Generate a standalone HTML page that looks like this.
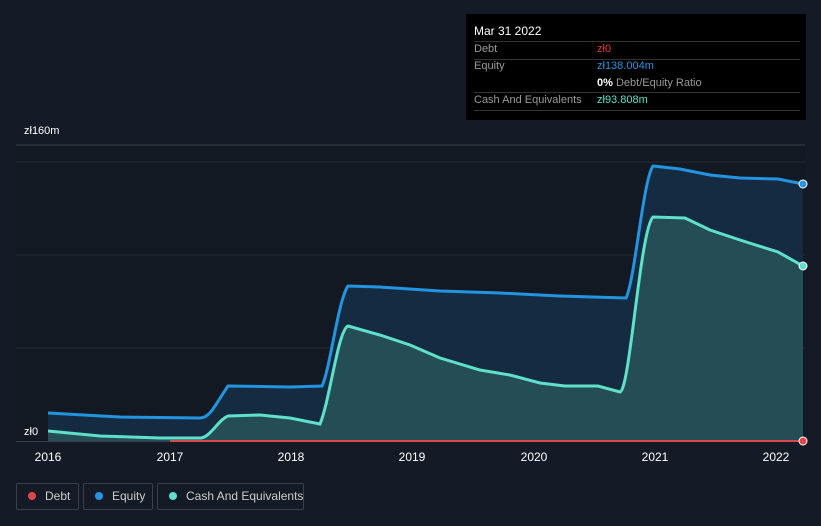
<!DOCTYPE html>
<html><head><meta charset="utf-8"><style>
body{margin:0;width:821px;height:526px;background:#151b26;font-family:"Liberation Sans",sans-serif;overflow:hidden;position:relative}
.tt{position:absolute;left:466px;top:14px;width:340px;height:106px;background:#000;color:#fff;font-size:11px}
.row{position:absolute;left:8px;width:326px;border-top:1px solid #333}
.lab{position:absolute;left:8px;color:#999}
.val{position:absolute;left:131px}
.leg{position:absolute;top:483px;height:27px;border:1px solid #3a404b;border-radius:2px;color:#ccc;font-size:12px;line-height:25px;box-sizing:border-box;white-space:nowrap}
.leg i{position:absolute;left:11px;top:8px;width:8px;height:8px;border-radius:50%}
.yr{position:absolute;top:450px;color:#fff;font-size:12px;transform:translateX(-50%)}
</style></head><body>
<svg width="821" height="526" style="position:absolute;left:0;top:0">
<rect x="16" y="145" width="789" height="296" fill="#131922"/>
<line x1="16" y1="145" x2="805" y2="145" stroke="#3a404b"/>
<line x1="16" y1="162" x2="805" y2="162" stroke="#262c36"/>
<line x1="16" y1="255" x2="805" y2="255" stroke="#262c36"/>
<line x1="16" y1="348" x2="805" y2="348" stroke="#262c36"/>
<path d="M48,413 L120,417 L200,418 C210,418 215,405 228,386 L290,387 L322,386 C330,370 338,300 348,286 L380,287 L440,291 L500,293 L560,296 L626,298 C635,280 643,180 653,166 L680,169 L710,175 L740,178 L778,179 L803,184 L803,441 L48,441Z" fill="#16304a" opacity="0.8"/>
<path d="M48,431 L100,436 L160,438 L200,438 C210,438 218,420 228,416 L260,415 L290,418 L320,424 C330,400 338,330 348,326 L380,335 L410,345 L440,358 L480,370 L510,375 L540,383 L565,386 L598,386 L620,392 C630,390 640,230 653,217 L685,218 L710,230 L740,240 L778,252 L803,266 L803,441 L48,441Z" fill="#2a5a5c" opacity="0.75"/>
<path d="M48,413 L120,417 L200,418 C210,418 215,405 228,386 L290,387 L322,386 C330,370 338,300 348,286 L380,287 L440,291 L500,293 L560,296 L626,298 C635,280 643,180 653,166 L680,169 L710,175 L740,178 L778,179 L803,184" fill="none" stroke="#2394e0" stroke-width="3"/>
<path d="M48,431 L100,436 L160,438 L200,438 C210,438 218,420 228,416 L260,415 L290,418 L320,424 C330,400 338,330 348,326 L380,335 L410,345 L440,358 L480,370 L510,375 L540,383 L565,386 L598,386 L620,392 C630,390 640,230 653,217 L685,218 L710,230 L740,240 L778,252 L803,266" fill="none" stroke="#5fe0cb" stroke-width="3"/>
<line x1="16" y1="441.5" x2="805" y2="441.5" stroke="#3a404b"/>
<line x1="170" y1="441" x2="803" y2="441" stroke="#e0474c" stroke-width="2"/>
<circle cx="803" cy="184" r="4" fill="#2394e0" stroke="#fff" stroke-width="1"/>
<circle cx="803" cy="266" r="4" fill="#5fe0cb" stroke="#fff" stroke-width="1"/>
<circle cx="803" cy="441" r="4" fill="#e0474c" stroke="#fff" stroke-width="1"/>
</svg>
<div style="position:absolute;left:24px;top:125px;color:#fff;font-size:11px">zł160m</div>
<div style="position:absolute;left:24px;top:426px;color:#fff;font-size:11px">zł0</div>
<div class="yr" style="left:48px">2016</div><div class="yr" style="left:170px">2017</div><div class="yr" style="left:291px">2018</div><div class="yr" style="left:412px">2019</div><div class="yr" style="left:534px">2020</div><div class="yr" style="left:655px">2021</div><div class="yr" style="left:776px">2022</div>
<div class="tt">
<div style="position:absolute;left:8px;top:10px;font-size:12px">Mar 31 2022</div>
<div class="row" style="top:27px"></div>
<div class="lab" style="top:29px">Debt</div><div class="val" style="top:29px;color:#e0393e">zł0</div>
<div class="row" style="top:45px"></div>
<div class="lab" style="top:46px">Equity</div><div class="val" style="top:46px;color:#2394e0">zł138.004m</div>
<div class="val" style="top:63px;color:#999"><b style="color:#fff">0%</b> Debt/Equity Ratio</div>
<div class="row" style="top:78px"></div>
<div class="lab" style="top:80px">Cash And Equivalents</div><div class="val" style="top:80px;color:#5fe0cb">zł93.808m</div>
<div class="row" style="top:96px"></div>
</div>
<div class="leg" style="left:16px;width:63px"><i style="background:#e0474c"></i><span style="position:absolute;left:28px">Debt</span></div>
<div class="leg" style="left:83px;width:70px"><i style="background:#2394e0"></i><span style="position:absolute;left:28px">Equity</span></div>
<div class="leg" style="left:157px;width:147px"><i style="background:#5fe0cb"></i><span style="position:absolute;left:28px">Cash And Equivalents</span></div>
</body></html>
